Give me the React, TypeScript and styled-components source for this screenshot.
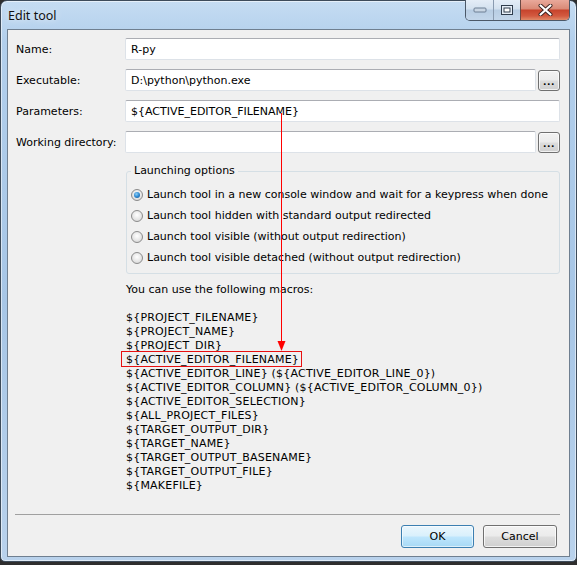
import React from "react";
import styled, { createGlobalStyle } from "styled-components";

const GlobalStyle = createGlobalStyle`
  html, body { margin: 0; padding: 0; background: #2e2e2e; }
  body { width: 577px; height: 565px; overflow: hidden; font-family: "DejaVu Sans", sans-serif; }
  * { box-sizing: border-box; }
`;

const Window = styled.div`
  position: relative;
  width: 577px;
  height: 562px;
  border: 1px solid #3d4b5a;
  border-radius: 7px 7px 5px 5px;
  background: linear-gradient(180deg, #c5dcf2 0px, #b2cfec 40px, #a7c6e6 300px, #b9d2ec 562px);
  display: flex;
  flex-direction: column;
  padding: 0 6px 4px 6px;
  box-shadow: inset 0 0 0 1px rgba(255, 255, 255, 0.55);
`;

const TitleBar = styled.div`
  height: 28px;
  display: flex;
  align-items: flex-start;
`;

const Title = styled.div`
  padding-top: 6px;
  margin-left: 1px;
  font-family: "Noto Sans", sans-serif;
  font-size: 12.5px;
  color: #111;
  text-shadow: 0 0 6px rgba(255, 255, 255, 0.9);
`;

const Caption = styled.div`
  margin-left: auto;
  margin-top: -1px;
  display: flex;
  border: 1px solid #4b5868;
  border-top: none;
  border-radius: 0 0 5px 5px;
  overflow: hidden;
  height: 21px;
`;

const CapBtn = styled.div<{ $close?: boolean; $w: number }>`
  width: ${(p) => p.$w}px;
  height: 100%;
  display: flex;
  align-items: center;
  justify-content: center;
  border-left: ${(p) => (p.$close ? "1px solid #6b4a44" : "1px solid #8a9bb0")};
  background: ${(p) =>
    p.$close
      ? "linear-gradient(180deg, #e9a99b 0%, #d98a76 45%, #c7432c 50%, #d35a40 80%, #e08a68 100%)"
      : "linear-gradient(180deg, #e4edf7 0%, #d3e1ef 45%, #b8cde3 50%, #c3d6ea 100%)"};
  &:first-child { border-left: none; }
`;

const Client = styled.div`
  flex: 1;
  border: 1px solid #6f7f90;
  background: #f0f0f0;
  display: flex;
  flex-direction: column;
  color: #000;
  font-size: 11px;
`;

const Form = styled.div`
  padding: 8px 9px 0 8px;
  display: grid;
  grid-template-columns: 109px 1fr;
  row-gap: 9px;
`;

const Label = styled.div`
  height: 22px;
  display: flex;
  align-items: center;
  white-space: nowrap;
`;

const FieldRow = styled.div`
  display: flex;
  align-items: center;
  gap: 2px;
`;

const TextBox = styled.input`
  flex: 1;
  min-width: 0;
  height: 22px;
  border: 1px solid #dde2e8;
  border-top-color: #abadb3;
  border-radius: 2px;
  background: #fff;
  padding: 0 5px;
  font: inherit;
  line-height: 16px;
  color: #000;
  outline: none;
`;

const Browse = styled.div`
  width: 22px;
  height: 21px;
  border: 1px solid #707070;
  border-radius: 3px;
  background: linear-gradient(180deg, #f2f2f2 0%, #ebebeb 48%, #dddddd 52%, #cfcfcf 100%);
  box-shadow: inset 0 0 0 1px rgba(255, 255, 255, 0.7);
  display: flex;
  align-items: flex-end;
  justify-content: center;
  padding-bottom: 4px;
  font-weight: bold;
  font-size: 9px;
  letter-spacing: 0.5px;
  line-height: 8px;
`;

const Group = styled.fieldset`
  margin: 11px 9px 0 118px;
  border: 1px solid #d5dfe5;
  border-radius: 3px;
  padding: 6px 0 5px 4px;
  min-width: 0;
`;

const Legend = styled.legend`
  padding: 0 3px;
  line-height: 14px;
`;

const RadioRow = styled.div`
  height: 21px;
  display: flex;
  align-items: center;
  gap: 4px;
  white-space: nowrap;
`;

const Radio = styled.span<{ $on?: boolean }>`
  width: 12px;
  height: 12px;
  border-radius: 50%;
  border: 1px solid #8b8b8b;
  background: radial-gradient(circle at 50% 40%, #ffffff 0%, #e4e4e4 60%, #cfcfcf 100%);
  display: flex;
  align-items: center;
  justify-content: center;
  &::after {
    content: "";
    display: ${(p) => (p.$on ? "block" : "none")};
    width: 6px;
    height: 6px;
    border-radius: 50%;
    background: radial-gradient(circle at 40% 35%, #8fd0f5 0%, #2f8ad3 50%, #174e86 100%);
  }
`;

const Macros = styled.div`
  flex: 1;
  margin: 9px 0 0 118px;
  line-height: 14px;
  white-space: pre;
`;

const MacroLine = styled.div<{ $wide?: boolean }>`
  height: 14px;
  letter-spacing: ${(p) => (p.$wide ? "0.2px" : "0")};
`;

const Footer = styled.div`
  display: flex;
  flex-direction: column;
  padding: 0 12px 8px 7px;
`;

const Separator = styled.div`
  height: 1px;
  background: #a0a0a0;
  margin-right: -3px;
`;

const Buttons = styled.div`
  margin-top: 10px;
  display: flex;
  justify-content: flex-end;
  gap: 9px;
`;

const PushButton = styled.div<{ $default?: boolean; $w: number }>`
  width: ${(p) => p.$w}px;
  height: 23px;
  border-radius: 3px;
  border: 1px solid ${(p) => (p.$default ? "#3c7fb1" : "#707070")};
  background: ${(p) =>
    p.$default
      ? "linear-gradient(180deg, #eaf6fd 0%, #d9f0fc 48%, #bee6fd 52%, #a7d9f5 100%)"
      : "linear-gradient(180deg, #f2f2f2 0%, #ebebeb 48%, #dddddd 52%, #cfcfcf 100%)"};
  box-shadow: inset 0 0 0 1px ${(p) => (p.$default ? "rgba(255,255,255,0.6)" : "rgba(255,255,255,0.75)")};
  display: flex;
  align-items: center;
  justify-content: center;
`;

const Overlay = styled.svg`
  position: absolute;
  left: -1px;
  top: -1px;
  pointer-events: none;
`;

const macros = [
  "${PROJECT_FILENAME}",
  "${PROJECT_NAME}",
  "${PROJECT_DIR}",
  "${ACTIVE_EDITOR_FILENAME}",
  "${ACTIVE_EDITOR_LINE} (${ACTIVE_EDITOR_LINE_0})",
  "${ACTIVE_EDITOR_COLUMN} (${ACTIVE_EDITOR_COLUMN_0})",
  "${ACTIVE_EDITOR_SELECTION}",
  "${ALL_PROJECT_FILES}",
  "${TARGET_OUTPUT_DIR}",
  "${TARGET_NAME}",
  "${TARGET_OUTPUT_BASENAME}",
  "${TARGET_OUTPUT_FILE}",
  "${MAKEFILE}",
];

const options = [
  "Launch tool in a new console window and wait for a keypress when done",
  "Launch tool hidden with standard output redirected",
  "Launch tool visible (without output redirection)",
  "Launch tool visible detached (without output redirection)",
];

export default function App() {
  return (
    <>
      <GlobalStyle />
      <Window>
        <TitleBar>
          <Title>Edit tool</Title>
          <Caption>
            <CapBtn $w={27}>
              <svg width="14" height="6" viewBox="0 0 14 6">
                <rect x="1" y="1" width="12" height="4" rx="1" fill="#c9d6e4" stroke="#6d7f94" />
              </svg>
            </CapBtn>
            <CapBtn $w={27}>
              <svg width="12" height="10" viewBox="0 0 12 10">
                <rect x="0.5" y="0.5" width="11" height="9" fill="#e6eef7" stroke="#2f3c4c" />
                <rect x="3" y="3" width="6" height="4" fill="#ffffff" stroke="#2f3c4c" />
              </svg>
            </CapBtn>
            <CapBtn $w={49} $close>
              <svg width="15" height="12" viewBox="0 0 15 12">
                <path d="M2.5 1.5 L12.5 10.5 M12.5 1.5 L2.5 10.5" stroke="#3b2320" strokeWidth="4" strokeLinecap="round" />
                <path d="M2.5 1.5 L12.5 10.5 M12.5 1.5 L2.5 10.5" stroke="#ffffff" strokeWidth="2.2" strokeLinecap="round" />
              </svg>
            </CapBtn>
          </Caption>
        </TitleBar>
        <Client>
          <Form>
            <Label>Name:</Label>
            <FieldRow>
              <TextBox defaultValue="R-py" readOnly />
            </FieldRow>
            <Label>Executable:</Label>
            <FieldRow>
              <TextBox defaultValue="D:\python\python.exe" readOnly />
              <Browse>...</Browse>
            </FieldRow>
            <Label>Parameters:</Label>
            <FieldRow>
              <TextBox defaultValue="${ACTIVE_EDITOR_FILENAME}" readOnly />
            </FieldRow>
            <Label>Working directory:</Label>
            <FieldRow>
              <TextBox defaultValue="" readOnly />
              <Browse>...</Browse>
            </FieldRow>
          </Form>
          <Group>
            <Legend>Launching options</Legend>
            {options.map((o, i) => (
              <RadioRow key={o}>
                <Radio $on={i === 0} />
                {o}
              </RadioRow>
            ))}
          </Group>
          <Macros>
            <MacroLine>You can use the following macros:</MacroLine>
            <MacroLine />
            {macros.map((m) => (
              <MacroLine key={m} $wide>
                {m}
              </MacroLine>
            ))}
          </Macros>
          <Footer>
            <Separator />
            <Buttons>
              <PushButton $default $w={73}>OK</PushButton>
              <PushButton $w={74}>Cancel</PushButton>
            </Buttons>
          </Footer>
        </Client>
        <Overlay width="577" height="562" viewBox="0 0 577 562">
          <rect x="281" y="113" width="1" height="230" fill="#ff0000" shapeRendering="crispEdges" />
          <polygon points="277.5,341 285.5,341 281.5,351" fill="#ff0000" />
          <rect x="121.5" y="351.5" width="180" height="15" fill="none" stroke="#e81010" strokeWidth="1" shapeRendering="crispEdges" />
        </Overlay>
      </Window>
    </>
  );
}
